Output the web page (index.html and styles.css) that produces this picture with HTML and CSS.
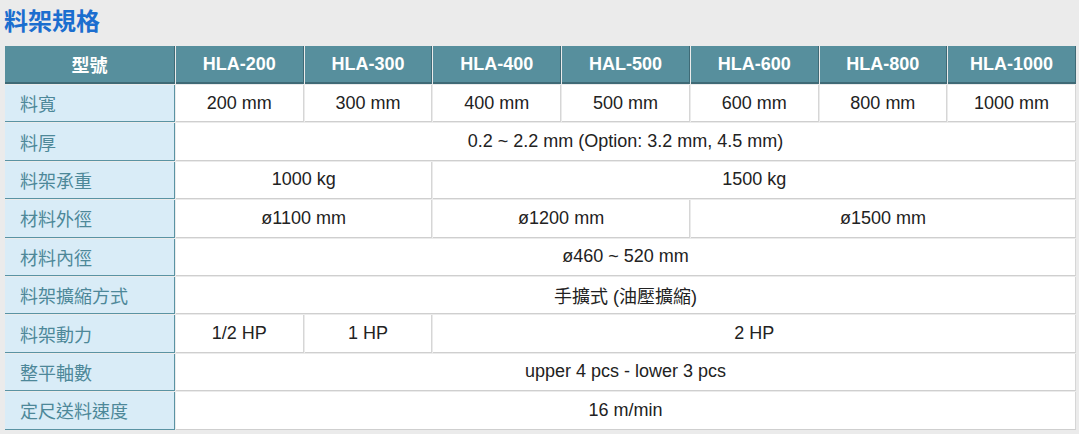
FILE: index.html
```html
<!DOCTYPE html>
<html lang="zh-Hant">
<head>
<meta charset="utf-8">
<title>料架規格</title>
<link rel="stylesheet" href="styles.css">
</head>
<body>
<h2 class="title">料架規格</h2>
<table class="spec">
  <colgroup>
    <col class="col-label">
    <col><col><col><col><col><col><col>
  </colgroup>
  <thead>
    <tr>
      <th>型號</th>
      <th>HLA-200</th>
      <th>HLA-300</th>
      <th>HLA-400</th>
      <th>HAL-500</th>
      <th>HLA-600</th>
      <th>HLA-800</th>
      <th>HLA-1000</th>
    </tr>
  </thead>
  <tbody>
    <tr>
      <td class="label">料寬</td>
      <td>200 mm</td>
      <td>300 mm</td>
      <td>400 mm</td>
      <td>500 mm</td>
      <td>600 mm</td>
      <td>800 mm</td>
      <td>1000 mm</td>
    </tr>
    <tr>
      <td class="label">料厚</td>
      <td colspan="7">0.2 ~ 2.2 mm (Option: 3.2 mm, 4.5 mm)</td>
    </tr>
    <tr>
      <td class="label">料架承重</td>
      <td colspan="2">1000 kg</td>
      <td colspan="5">1500 kg</td>
    </tr>
    <tr>
      <td class="label">材料外徑</td>
      <td colspan="2">ø1100 mm</td>
      <td colspan="2">ø1200 mm</td>
      <td colspan="3">ø1500 mm</td>
    </tr>
    <tr>
      <td class="label">材料內徑</td>
      <td colspan="7">ø460 ~ 520 mm</td>
    </tr>
    <tr>
      <td class="label">料架擴縮方式</td>
      <td colspan="7">手擴式 (油壓擴縮)</td>
    </tr>
    <tr>
      <td class="label">料架動力</td>
      <td>1/2 HP</td>
      <td>1 HP</td>
      <td colspan="5">2 HP</td>
    </tr>
    <tr>
      <td class="label">整平軸數</td>
      <td colspan="7">upper 4 pcs - lower 3 pcs</td>
    </tr>
    <tr>
      <td class="label">定尺送料速度</td>
      <td colspan="7">16 m/min</td>
    </tr>
  </tbody>
</table>
</body>
</html>
```
FILE: styles.css
```css
html, body {
  margin: 0;
  background: #ebebeb;
}
body {
  padding: 5px 2px 0 4px;
  font-family: "Liberation Sans", "Noto Sans CJK TC", sans-serif;
  color: #222;
}
.title {
  margin: 0 0 10px 0;
  font-size: 24px;
  line-height: 30px;
  font-weight: bold;
  color: #1b6ecf;
  font-family: "Noto Sans CJK TC", "Liberation Sans", sans-serif;
}
.spec {
  width: 1073px;
  table-layout: fixed;
  border-collapse: separate;
  border-spacing: 1px;
  font-size: 18px;
}
.col-label {
  width: 170px;
}
.spec th {
  height: 38px;
  padding: 0;
  box-sizing: border-box;
  background: #578f9d;
  color: #fff;
  font-weight: bold;
  text-align: center;
  border-right: 1px solid #3f6a76;
  border-bottom: 2px solid #3f6a76;
}
.spec th:first-child {
  font-family: "Noto Sans CJK TC", "Liberation Sans", sans-serif;
}
.spec tbody tr {
  height: 37.4px;
}
.spec td {
  padding: 0;
  background: #fff;
  text-align: center;
  border-right: 1px solid #d6d6d6;
  border-bottom: 1px solid #cfcfcf;
}
.spec td.label {
  text-align: left;
  padding-left: 15px;
  background: #d9ecf7;
  color: #4d8899;
  font-family: "Noto Sans CJK TC", "Liberation Sans", sans-serif;
  border-right: 1px solid #5a93a3;
  border-bottom: 1px solid #5a93a3;
}
```
